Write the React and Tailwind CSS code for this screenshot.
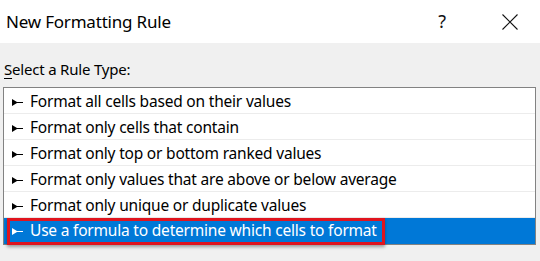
import React from 'react';

const rules = [
  'Format all cells based on their values',
  'Format only cells that contain',
  'Format only top or bottom ranked values',
  'Format only values that are above or below average',
  'Format only unique or duplicate values',
  'Use a formula to determine which cells to format',
];

// small wedge arrow shown in front of each rule
const Bullet = ({ color }) => (
  <svg width="11" height="7" viewBox="0 0 11 7" className="shrink-0">
    <polygon points="0,0 0,7 5,4 11,4 11,3 5,3" fill={color} />
  </svg>
);

const App = () => {
  const font = { fontFamily: '"Noto Sans", "Open Sans", sans-serif' };

  return (
    <div className="w-[540px] h-[261px] bg-[#f0f0f0] overflow-hidden" style={font}>
      <div className="h-[43px] bg-white flex items-center pl-[6px] pr-[22px]">
        <span className="text-[17px] text-black tracking-[-0.2px]">New Formatting Rule</span>
        <span className="ml-auto text-[18px] text-[#111] mr-[56px]">?</span>
        <svg width="16" height="16" viewBox="0 0 16 16">
          <path d="M0.5 0.5 L15.5 15.5 M15.5 0.5 L0.5 15.5" stroke="#111" strokeWidth="1.1" />
        </svg>
      </div>

      <div className="pt-[16px] pl-[4px] text-[15px] text-black leading-[20px] tracking-[-0.2px]">
        <span className="underline underline-offset-[3px]">S</span>elect a Rule Type:
      </div>

      <div className="mt-[8px] ml-[3px] w-[533px] border border-[#828282] bg-white">
        {rules.map((rule, i) => {
          const selected = i === rules.length - 1;
          return (
            <div
              key={rule}
              className={
                selected
                  ? 'h-[26px] bg-[#0078d7] text-white flex items-center'
                  : 'h-[26px] pt-[3px] border-b border-[#ececec] text-black flex items-center'
              }
            >
              <div
                className={
                  selected
                    ? 'ml-[3px] h-[27px] pl-[2px] pr-[5px] border-[3px] border-[#e0141e] shadow-[0_2px_3px_rgba(0,0,0,0.35)] flex items-center gap-[7px]'
                    : 'ml-[8px] flex items-center gap-[7px]'
                }
              >
                <Bullet color={selected ? '#ffffff' : '#000000'} />
                <span className="text-[15.5px] tracking-[-0.2px] whitespace-nowrap">{rule}</span>
              </div>
            </div>
          );
        })}
      </div>
    </div>
  );
};

export default App;
